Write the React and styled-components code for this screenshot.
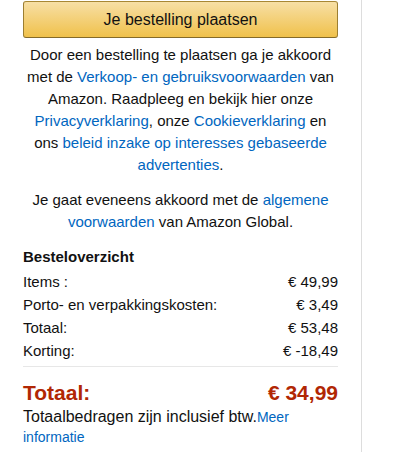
import React from 'react'
import styled, { createGlobalStyle } from 'styled-components'

const GlobalStyle = createGlobalStyle`
    body {
        margin: 0;
        background: #fff;
        font-family: "Liberation Sans", Arial, sans-serif;
        color: #111;
    }
`;

const Panel = styled.div`
    width: 315px;
    min-height: 452px;
    padding: 1px 23px 0 23px;
    border-right: 1px solid #ddd;
    `;

const PlaceButton = styled.button`
    display: block;
    width: 100%;
    height: 37px;
    box-sizing: border-box;
    margin: 0;
    padding: 0;
    border: 1px solid;
    border-color: #a88734 #9c7e31 #846a29;
    border-radius: 3px;
    background: linear-gradient(to bottom, #f7dfa5, #f0c14b);
    font-family: "Liberation Sans", Arial, sans-serif;
    font-size: 16px;
    color: #111;
    `;

const Legal = styled.p`
    margin: ${props => props.top}px 0 0;
    font-size: 15px;
    line-height: 22px;
    text-align: center;
    color: #111;
    `;

const Link = styled.a`
    color: #0066c0;
    text-decoration: none;
    font-size: ${props => props.small ? '14px' : 'inherit'};
    `;

const Heading = styled.h3`
    margin: 13px 0 2px;
    font-size: 15px;
    line-height: 22px;
    font-weight: 700;
    color: #111;
    `;

const Row = styled.div`
    display: flex;
    justify-content: space-between;
    font-size: 15px;
    line-height: 23px;
    color: #111;
    `;

const Divider = styled.hr`
    margin: 4px 0 0;
    border: 0;
    border-top: 1px solid #e7e7e7;
    `;

const TotalRow = styled.div`
    display: flex;
    justify-content: space-between;
    margin-top: 12px;
    font-size: 21px;
    line-height: 28px;
    font-weight: 700;
    color: #b12704;
    `;

const Note = styled.div`
    font-size: 16px;
    line-height: 20px;
    color: #111;
    `;

const rows = [
    ['Items :', '€ 49,99'],
    ['Porto- en verpakkingskosten:', '€ 3,49'],
    ['Totaal:', '€ 53,48'],
    ['Korting:', '€ -18,49'],
];

export default function App() {
    return (
        <Panel>
            <GlobalStyle />
            <PlaceButton>Je bestelling plaatsen</PlaceButton>
            <Legal top={6}>
                Door een bestelling te plaatsen ga je akkoord met de{' '}
                <Link href="#">Verkoop- en gebruiksvoorwaarden</Link> van Amazon.
                Raadpleeg en bekijk hier onze <Link href="#">Privacyverklaring</Link>,
                onze <Link href="#">Cookieverklaring</Link> en ons{' '}
                <Link href="#">beleid inzake op interesses gebaseerde advertenties</Link>.
            </Legal>
            <Legal top={13}>
                Je gaat eveneens akkoord met de{' '}
                <Link href="#">algemene voorwaarden</Link> van Amazon Global.
            </Legal>
            <Heading>Besteloverzicht</Heading>
            {rows.map(([label, value]) => (
                <Row key={label}>
                    <span>{label}</span>
                    <span>{value}</span>
                </Row>
            ))}
            <Divider />
            <TotalRow>
                <span>Totaal:</span>
                <span>€ 34,99</span>
            </TotalRow>
            <Note>
                Totaalbedragen zijn inclusief btw.<Link small href="#">Meer informatie</Link>
            </Note>
        </Panel>
    )
}
